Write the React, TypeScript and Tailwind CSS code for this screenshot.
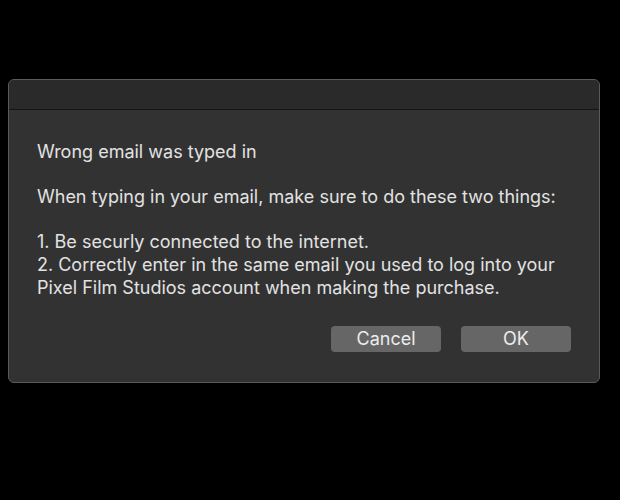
import React from "react";

export default function App() {
  return (
    <div className="w-[620px] h-[500px] bg-black overflow-hidden pt-[79px] pl-[8px]" style={{ fontFamily: 'Inter, "Liberation Sans", Arial, sans-serif' }}>
      <div className="w-[592px] h-[304px] rounded-[6px] border border-[#5a5a5a] bg-[#323232] overflow-hidden flex flex-col">
        <div className="h-[30px] bg-[#2a2a2a] border-b border-[#141414] shrink-0" />
        <div className="flex-1 flex flex-col pl-[28px] pr-[10px] pt-[30px] text-[18px] leading-[23px] text-[#e2e2e2]">
          <p>Wrong email was typed in</p>
          <p className="mt-[22px]">When typing in your email, make sure to do these two things:</p>
          <div className="mt-[22px]">
            <p>1. Be securly connected to the internet.</p>
            <p>2. Correctly enter in the same email you used to log into your</p>
            <p>Pixel Film Studios account when making the purchase.</p>
          </div>
          <div className="flex justify-end gap-[20px] mt-[27px] pr-[18px]">
            <button className="w-[110px] h-[26px] rounded-[4px] bg-[#666666] text-[#ececec] text-[18px] leading-[26px]">Cancel</button>
            <button className="w-[110px] h-[26px] rounded-[4px] bg-[#666666] text-[#ececec] text-[18px] leading-[26px]">OK</button>
          </div>
        </div>
      </div>
    </div>
  );
}
